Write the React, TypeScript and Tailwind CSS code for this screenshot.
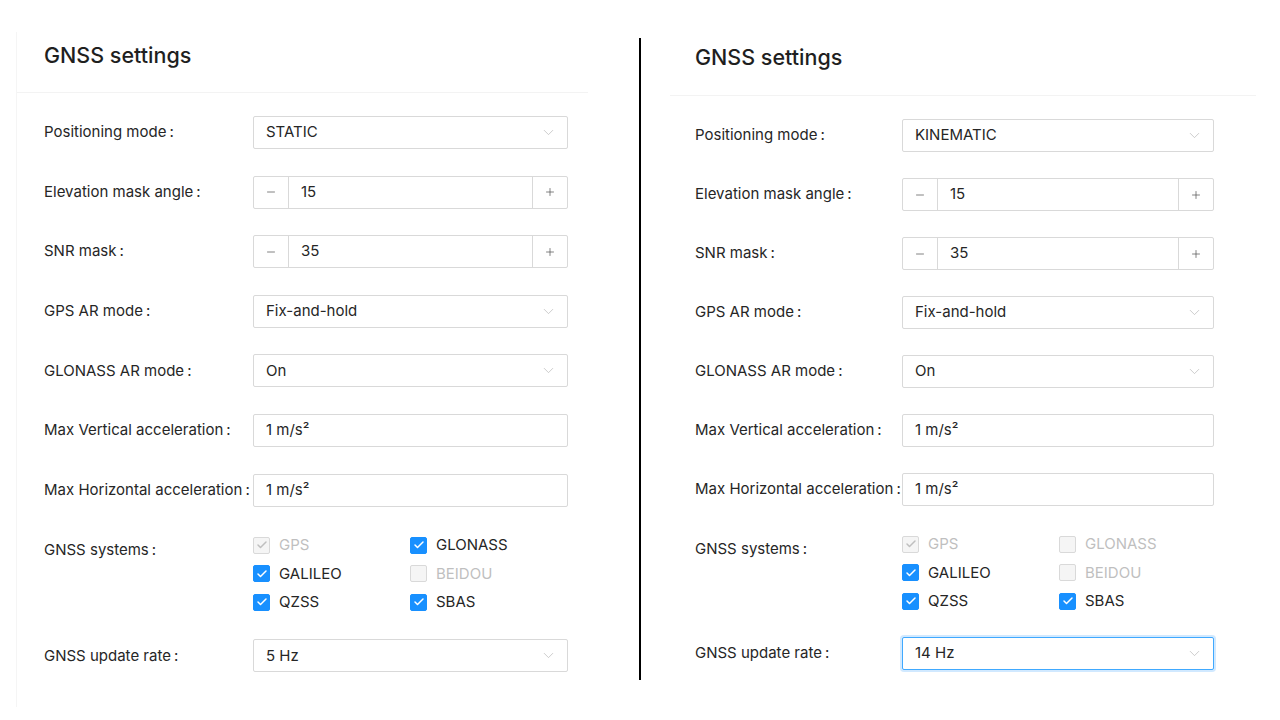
import { Check, ChevronDown, Minus, Plus } from 'lucide-react';

type Sys = { name: string; checked: boolean; disabled: boolean };

type PanelProps = {
  mode: string;
  rate: string;
  focused?: boolean;
  systems: Sys[];
  labelW: number;
  ctrlW: number;
  padL: string;
  titlePt: string;
  bodyPt: string;
  rowGap: string;
  rateMt: string;
};

const labelCls = 'text-[15px] text-[#262626] flex items-center whitespace-nowrap';

function Label({ text, w }: { text: string; w: number }) {
  return (
    <div className={labelCls} style={{ width: w }}>
      {text}
      <span className="ml-[3px]">:</span>
    </div>
  );
}

function Select({ value, focused }: { value: string; focused?: boolean }) {
  return (
    <div
      className={
        'flex-1 h-[33px] flex items-center justify-between pl-[12px] pr-[10px] rounded-[2px] border bg-white text-[15px] text-[#262626] ' +
        (focused ? 'border-[#40a9ff] shadow-[0_0_0_2px_rgba(24,144,255,0.2)]' : 'border-[#d9d9d9]')
      }
    >
      <span>{value}</span>
      <ChevronDown className="w-[17px] h-[17px] text-[#bfbfbf]" strokeWidth={1.1} />
    </div>
  );
}

function Stepper({ value }: { value: string }) {
  return (
    <div className="flex-1 h-[33px] flex rounded-[2px] border border-[#d9d9d9] bg-white text-[15px] text-[#262626]">
      <div className="w-[35px] flex items-center justify-center border-r border-[#d9d9d9]">
        <Minus className="w-[12px] h-[12px] text-[#595959]" strokeWidth={1.5} />
      </div>
      <div className="flex-1 flex items-center pl-[12px]">{value}</div>
      <div className="w-[35px] flex items-center justify-center border-l border-[#d9d9d9]">
        <Plus className="w-[12px] h-[12px] text-[#595959]" strokeWidth={1.5} />
      </div>
    </div>
  );
}

function TextBox({ value }: { value: string }) {
  return (
    <div className="flex-1 h-[33px] flex items-center pl-[12px] rounded-[2px] border border-[#d9d9d9] bg-white text-[15px] text-[#262626]">
      {value}
    </div>
  );
}

function Box({ s }: { s: Sys }) {
  const active = s.checked && !s.disabled;
  return (
    <div className="flex items-center h-[28.5px] w-[157px]">
      <div
        className={
          'w-[17px] h-[17px] rounded-[2px] border flex items-center justify-center ' +
          (active ? 'bg-[#1890ff] border-[#1890ff]' : 'bg-[#f5f5f5] border-[#d9d9d9]')
        }
      >
        {s.checked && (
          <Check
            className={'w-[12px] h-[12px] ' + (active ? 'text-white' : 'text-[#bfbfbf]')}
            strokeWidth={3}
          />
        )}
      </div>
      <span className={'ml-[9px] text-[15px] ' + (s.disabled ? 'text-[#bfbfbf]' : 'text-[#262626]')}>
        {s.name}
      </span>
    </div>
  );
}

function Panel(p: PanelProps) {
  const row = (label: string, ctrl: React.ReactNode) => (
    <div className="flex" style={{ width: p.labelW + p.ctrlW }}>
      <Label text={label} w={p.labelW} />
      {ctrl}
    </div>
  );
  return (
    <div className="flex flex-col h-full">
      <div className={'h-[61px] border-b border-[#f3f3f3] ' + p.padL + ' ' + p.titlePt}>
        <h1 className="text-[21.5px] leading-[26px] text-[#1f1f1f] font-medium">GNSS settings</h1>
      </div>
      <div className={'flex flex-col ' + p.padL + ' ' + p.bodyPt + ' ' + p.rowGap}>
        {row('Positioning mode', <Select value={p.mode} />)}
        {row('Elevation mask angle', <Stepper value="15" />)}
        {row('SNR mask', <Stepper value="35" />)}
        {row('GPS AR mode', <Select value="Fix-and-hold" />)}
        {row('GLONASS AR mode', <Select value="On" />)}
        {row('Max Vertical acceleration', <TextBox value="1 m/s²" />)}
        {row('Max Horizontal acceleration', <TextBox value="1 m/s²" />)}
        <div className="flex -mt-[2px]">
          <div className="h-[33px] mt-[2.5px] flex">
            <Label text="GNSS systems" w={p.labelW} />
          </div>
          <div className="grid grid-cols-2 w-[314px]">
            {p.systems.map((s) => (
              <Box key={s.name} s={s} />
            ))}
          </div>
        </div>
        <div className={p.rateMt}>
          {row('GNSS update rate', <Select value={p.rate} focused={p.focused} />)}
        </div>
      </div>
    </div>
  );
}

export default function App() {
  const left: Sys[] = [
    { name: 'GPS', checked: true, disabled: true },
    { name: 'GLONASS', checked: true, disabled: false },
    { name: 'GALILEO', checked: true, disabled: false },
    { name: 'BEIDOU', checked: false, disabled: true },
    { name: 'QZSS', checked: true, disabled: false },
    { name: 'SBAS', checked: true, disabled: false },
  ];
  const right: Sys[] = [
    { name: 'GPS', checked: true, disabled: true },
    { name: 'GLONASS', checked: false, disabled: true },
    { name: 'GALILEO', checked: true, disabled: false },
    { name: 'BEIDOU', checked: false, disabled: true },
    { name: 'QZSS', checked: true, disabled: false },
    { name: 'SBAS', checked: true, disabled: false },
  ];
  return (
    <div
      className="w-[1280px] h-[720px] bg-white flex overflow-hidden"
      style={{ fontFamily: 'Inter, "Noto Sans", sans-serif' }}
    >
      <div className="ml-[16px] mt-[32px] w-[572px] h-[675px] border-l border-[#f5f5f5]">
        <Panel
          mode="STATIC"
          rate="5 Hz"
          systems={left}
          labelW={209}
          ctrlW={315}
          padL="pl-[27px]"
          titlePt="pt-[10px]"
          bodyPt="pt-[23px]"
          rowGap="gap-[26.6px]"
          rateMt="-mt-[4px]"
        />
      </div>
      <div className="ml-[51px] mt-[38px] w-[2px] h-[642px] bg-black" />
      <div className="ml-[29px] mt-[35px] w-[586px] h-[675px]">
        <Panel
          mode="KINEMATIC"
          rate="14 Hz"
          focused
          systems={right}
          labelW={207}
          ctrlW={312}
          padL="pl-[25px]"
          titlePt="pt-[9px]"
          bodyPt="pt-[23px]"
          rowGap="gap-[26px]"
          rateMt="-mt-[5px]"
        />
      </div>
    </div>
  );
}
